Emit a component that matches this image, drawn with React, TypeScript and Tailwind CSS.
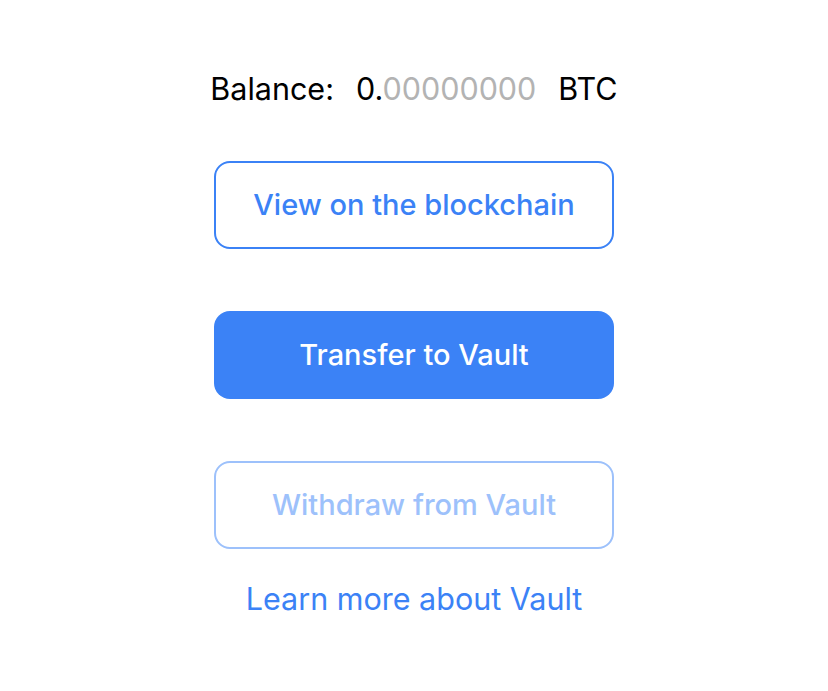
const FONT = { fontFamily: 'Inter, "Noto Sans", sans-serif' };

function OutlineButton({ label, disabled }: { label: string; disabled?: boolean }) {
  return (
    <button
      className={`w-[400px] h-[88px] rounded-[16px] border-2 bg-white text-[29px] font-medium flex items-center justify-center ${
        disabled ? 'border-[#9dc1fb] text-[#9dc1fb]' : 'border-[#3b82f6] text-[#3b82f6]'
      }`}
    >
      {label}
    </button>
  );
}

export default function App() {
  return (
    <div className="w-[828px] h-[691px] bg-white flex flex-col items-center pt-[71px]" style={FONT}>
      {/* Balance */}
      <div className="h-[36px] flex items-center gap-[22px] text-[30.5px] text-black">
        <span>Balance:</span>
        <span>
          0.<span className="text-[#b3b3b3]">00000000</span>
        </span>
        <span>BTC</span>
      </div>

      <div className="mt-[54px] flex flex-col gap-[62px]">
        <OutlineButton label="View on the blockchain" />
        <button className="w-[400px] h-[88px] rounded-[16px] bg-[#3b82f6] text-white text-[29px] font-medium flex items-center justify-center">
          Transfer to Vault
        </button>
        <OutlineButton label="Withdraw from Vault" disabled />
      </div>

      <a className="mt-[32px] h-[36px] flex items-center text-[30.5px] text-[#3b82f6]">
        Learn more about Vault
      </a>
    </div>
  );
}
